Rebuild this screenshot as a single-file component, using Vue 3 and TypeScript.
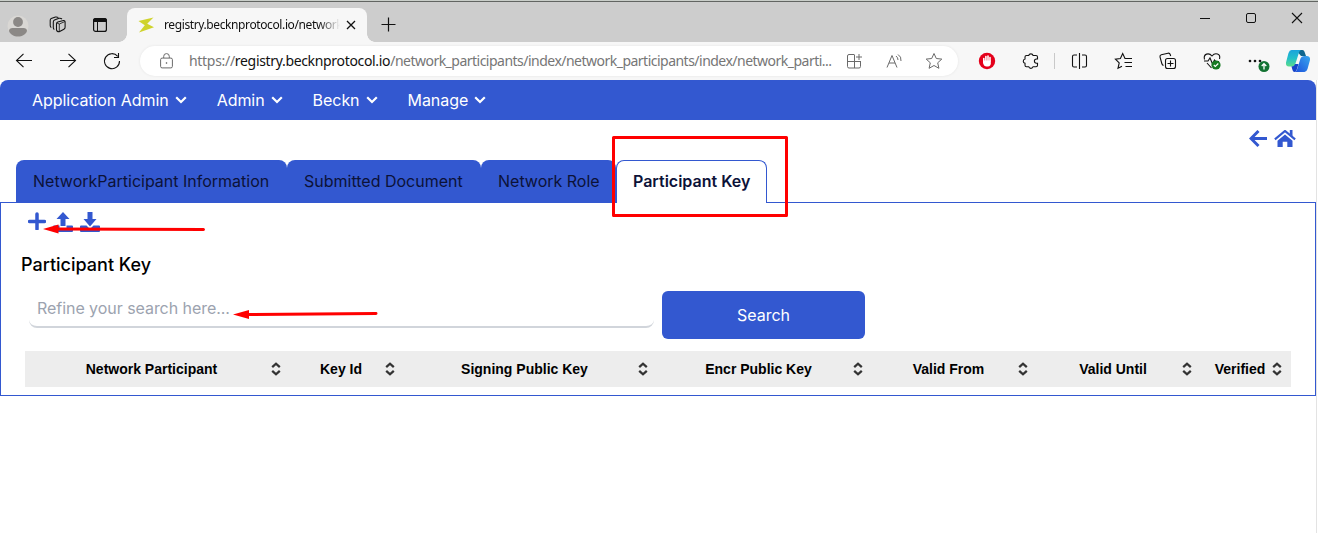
<script setup lang="ts">
const menus: string[] = ['Application Admin', 'Admin', 'Beckn', 'Manage']
const tabs: string[] = ['NetworkParticipant Information', 'Submitted Document', 'Network Role', 'Participant Key']
const activeTab = 'Participant Key'
const columns: string[] = [
  'Network Participant',
  'Key Id',
  'Signing Public Key',
  'Encr Public Key',
  'Valid From',
  'Valid Until',
  'Verified',
]
</script>

<template>
  <div class="window">
    <div class="topline"></div>
    <header class="strip">
      <svg class="avatar" width="22" height="22" viewBox="0 0 22 22">
        <circle cx="11" cy="11" r="10.500" fill="#d9d7d4" />
        <circle cx="11" cy="7" r="4.900" fill="#8b8886" />
        <path d="M2 16C2 14 3.500 13 5.500 13h11c2 0 3.500 1 3.500 3C19 19.500 15 21.500 11 21.500S3 19.500 2 16Z" fill="#8b8886" />
      </svg>
      <svg class="spaces" width="18" height="18" viewBox="0 0 18 18" fill="none" stroke="#111" stroke-width="1.050" stroke-linejoin="round">
        <path d="M7.500 8q0-1.500 1.300-2l5.700-1.500q1.600-.2 1.600 1.500v5.300q0 1.300-1.200 1.900l-4.700 2.600q-2.700 0-2.700-2Z" />
        <path d="M7.700 6.900 10.300 8 16 5.500M10.300 8v7.500" stroke-width=".8" />
        <path d="M5.300 13.500Q4.300 13 4.300 11.500V6Q4.300 4.600 5.500 4L10 2.300q1.800-.3 3 .7M2.300 11.500Q1.200 11 1.200 9.500V4.300q0-1.300 1-1.800L6.500 1q1.500-.2 2.800.4" />
      </svg>
      <svg class="panes" width="16" height="16" viewBox="0 0 16 16">
        <rect x="1.600" y="1.600" width="12.800" height="12.800" rx="2" fill="none" stroke="#111" stroke-width="1.200" />
        <path d="M1 5V3.500Q1 1 3.500 1h9Q15 1 15 3.500V5Z" fill="#111" /><path d="M5.500 5v9.500" stroke="#111" />
      </svg>
      <div class="btab">
        <svg width="18" height="18" viewBox="0 0 18 18"><path d="M16.500 1.500 1.500 5l6.300 4.300L2 16.500l15-5.300-6.800-3.500Z" fill="#cfd32c" /></svg>
        <span class="btitle">registry.becknprotocol.io/network</span>
        <svg width="10" height="10" viewBox="0 0 10 10"><path d="m1 1 8 8M9 1 1 9" stroke="#111" stroke-width="1.300" /></svg>
      </div>
      <svg class="plus" width="15" height="15" viewBox="0 0 15 15"><path d="M7.500.5v14M.5 7.500h14" stroke="#111" stroke-width="1.200" /></svg>
      <div class="controls">
        <svg width="46" height="32" viewBox="0 0 46 32"><path d="M18 16.500h10" stroke="#111" /></svg>
        <svg width="46" height="32" viewBox="0 0 46 32"><rect x="18.500" y="11.500" width="9" height="9" rx="1.500" fill="none" stroke="#111" /></svg>
        <svg width="46" height="32" viewBox="0 0 46 32"><path d="m18 11 10 10m0-10L18 21" stroke="#111" stroke-width="1.100" /></svg>
      </div>
    </header>

    <div class="toolbar">
      <div class="slots">
        <svg width="44" height="24" viewBox="0 0 44 24"><path d="M30 11.500H14.500m7-6.700-7 6.700 7 6.700" /></svg>
        <svg width="44" height="24" viewBox="0 0 44 24"><path d="M14 11.500h15.500m-7-6.700 7 6.700-7 6.700" /></svg>
        <svg width="44" height="24" viewBox="0 0 44 24"><path d="M27.700 7.300A7.500 7.500 0 1 0 29.500 12M28.500 4v4.500H24" /></svg>
      </div>
      <div class="address">
        <svg class="lock" width="13" height="16" viewBox="0 0 13 16"><rect x=".6" y="5.100" width="11.800" height="9.800" rx="1.500" /><path d="M3.700 5V3.400a2.800 2.800 0 0 1 5.600 0V5" /><circle cx="6.500" cy="10" r=".5" /></svg>
        <span class="url">https://<b>registry.becknprotocol.io</b><span class="path">/network_participants/index/network_participants/index/network_parti...</span></span>
        <div class="addr-icons">
          <svg width="40" height="20" viewBox="0 0 40 20"><path d="M20 3.500h-5q-1.500 0-1.500 1.500v10.500q0 1.500 1.500 1.500h10q1.500 0 1.500-1.500v-5M13.500 10.500H27M20.500 3.500V17M25 3v6M22 6h6" /></svg>
          <svg width="40" height="20" viewBox="0 0 40 20"><path d="m13 16.500 5-12 5 12M15 12h6M22 5q2 1.500 2 4M24 3.500q3.500 2 3 6.500" /></svg>
          <svg width="40" height="20" viewBox="0 0 40 20"><path d="m20 2.500 2.300 5 5.500.6-4.100 3.700 1.200 5.500-4.900-2.800-4.900 2.800 1.200-5.500-4.100-3.700 5.500-.6Z" /></svg>
        </div>
      </div>
      <div class="slots ext">
        <svg width="46" height="24" viewBox="0 0 46 24">
          <circle cx="23" cy="12" r="8.200" fill="#e4001b" stroke="none" />
          <path d="M19.800 12.500V9.500M21.900 12V7.500M24 12V7M26 12V8.500" stroke="#fff" stroke-width="1.600" stroke-linecap="round" /><path d="M19 11.500h7.800v2.800q0 3-2.800 3.300h-1.500q-2.500 0-3.500-3.500Z" fill="#fff" stroke="none" />
        </svg>
        <svg width="44" height="24" viewBox="0 0 44 24"><path d="M16.500 6.500h2.200a2.300 2.300 0 0 1 4.400 0H26q1.500 0 1.500 1.500v2h-1a2.100 2.100 0 0 0 0 4.200h1v2q0 1.500-1.500 1.500h-2.900a2.300 2.300 0 0 1-4.400 0h-2.200q-1.500 0-1.500-1.500v-1.900a2.200 2.200 0 0 1 0-4.300V8q0-1.500 1.500-1.500Z" /></svg>
        <i class="sep"></i>
        <svg width="46" height="24" viewBox="0 0 46 24"><path d="M21 6h-3q-1.500 0-1.500 1.500v9q0 1.500 1.500 1.500h3M26 6h3q1.500 0 1.500 1.500v9q0 1.500-1.500 1.500h-3M23.500 4v16" /></svg>
        <svg width="44" height="24" viewBox="0 0 44 24"><path d="M25 9.500h-2l-2.300-5-2.300 5-5 .6 3.800 3.800-1.200 5.400 4-2.100M22.500 9.500H30M22.500 13.500H30M23.500 17.500H30" /></svg>
        <svg width="44" height="24" viewBox="0 0 44 24"><rect x="19.500" y="9.500" width="10" height="10" rx="2" /><path d="M24.500 11.500v6M21.500 14.500h6M17.500 16.500q-1.300-.5-1.700-2L14 8q-.3-1.700 1.300-2.200L22 4.200q1.700-.3 2.200 1.300l.5 1.500" /></svg>
        <svg width="44" height="24" viewBox="0 0 44 24"><path d="M14.500 10.500C13 4.500 19 3.300 22 7c3-3.700 9-2.500 7.500 3M14 12h4l2-3 2.500 6 2-4 1.300 1.500H29M17 14l4.500 5" /><circle cx="26" cy="16" r="4.600" fill="#177a22" stroke="none" /><path d="m23.800 16 1.500 1.500 3-3" stroke="#fff" /></svg>
        <svg width="44" height="24" viewBox="0 0 44 24"><circle cx="16" cy="12" r=".8" fill="#111" /><circle cx="21" cy="12" r=".8" fill="#111" /><circle cx="26" cy="12" r=".8" fill="#111" /><circle cx="30" cy="17.500" r="5.500" fill="#137333" stroke="none" /><path d="M30 20.500V15m-2.300 2 2.300-2.300 2.300 2.300" stroke="#fff" stroke-width="1.300" /></svg>
        <svg width="40" height="24" viewBox="0 0 40 24">
          <defs>
            <linearGradient id="cpl" x1="0" y1="0" x2="0" y2="1"><stop offset="0" stop-color="#1ba3dc" /><stop offset=".5" stop-color="#23bfca" /><stop offset="1" stop-color="#5bdc8b" /></linearGradient>
            <linearGradient id="cpr" x1="1" y1="0" x2="0" y2="1"><stop offset="0" stop-color="#38a7ee" /><stop offset="1" stop-color="#1d51dc" /></linearGradient>
          </defs>
          <g stroke="none"><path d="M18 1h6.500q1.500 0 2 1.700L28 7h-5Z" fill="#10678f" /><path d="M13.500 1H23q-1.500.7-2 2.500l-3.500 11q-1 3-3.500 3h-3q-3.500 0-3-4L10.500 4q1-3 3-3Z" fill="url(#cpl)" /><path d="M26 7h2.500q4 0 3.500 4l-2.500 9q-1 3-3 3H17q1.500-.7 2-2.500l3.500-11Q23.300 7 26 7Z" fill="url(#cpr)" /><path d="M13.500 17.500q2.500 0 3.700-2.500l3.300 0-1.700 5.500q-.7 2.500-2.300 2.500-1.500 0-2-2Z" fill="#1744c8" /></g>
        </svg>
      </div>
    </div>

    <main class="page">
      <nav class="nav">
        <a v-for="m in menus" :key="m">{{ m }}<svg width="12" height="8" viewBox="0 0 12 8"><path d="m1.200 1.200 4.800 4.800 4.800-4.800" fill="none" stroke="#fff" stroke-width="2.200" /></svg></a>
      </nav>
      <div class="actions">
        <svg width="19" height="18" viewBox="0 0 19 18"><path d="M18 8.500H2.500M9.500 1 2 8.500 9.500 16" fill="none" stroke="#3358d0" stroke-width="3" /></svg>
        <svg width="22" height="18" viewBox="0 0 22 18" fill="#3358d0"><path d="M11 4.500 3.500 10.700v6.300h5.200v-5.200h4.600v5.200h5.200v-6.300Z" /><path d="m.9 9.300 10.100-8.300 10.100 8.300" fill="none" stroke="#3358d0" stroke-width="2.200" /><path d="M15.800 0h2.700v6.500l-2.700-2.200Z" /></svg>
      </div>
      <div class="tabs">
        <div v-for="t in tabs" :key="t" class="tab" :class="{ active: t === activeTab }">{{ t }}</div>
      </div>
      <section class="panel">
        <div class="tools">
          <svg width="18" height="18" viewBox="0 0 18 18"><path d="M9 2v15M1.500 9.500h15" stroke="#3358d0" stroke-width="3.500" stroke-linecap="round" /></svg>
          <svg width="20" height="21" viewBox="0 0 20 21" fill="#3358d0"><path d="M10 0 3.500 7H7.500v7h5V7h4ZM1 13.500h5.500V16h7v-2.500H19q1 0 1 1V19q0 1-1 1H1q-1 0-1-1v-4.500q0-1 1-1Z" /></svg>
          <svg width="20" height="21" viewBox="0 0 20 21" fill="#3358d0"><path d="M7.500 0h5v7h4L10 14.500 3.500 7h4ZM1 13.500h5.500l3.500 3.500 3.500-3.500H19q1 0 1 1V19q0 1-1 1H1q-1 0-1-1v-4.500q0-1 1-1Z" /></svg>
        </div>
        <h1>Participant Key</h1>
        <div class="search">
          <input type="text" placeholder="Refine your search here..." />
          <button>Search</button>
        </div>
        <div class="thead">
          <div v-for="c in columns" :key="c" class="th">
            <span>{{ c }}</span>
            <svg width="10" height="14" viewBox="0 0 10 14"><path d="m1.200 5.100 3.800-3.400 3.800 3.400M1.200 8.900l3.800 3.400 3.800-3.400" fill="none" stroke="#333" stroke-width="2.300" /></svg>
          </div>
        </div>
      </section>
    </main>

    <svg class="marks" width="1318" height="533" viewBox="0 0 1318 533" fill="none" stroke="#f00" stroke-width="3" stroke-linecap="round" stroke-linejoin="round">
      <rect x="613.500" y="137.500" width="173" height="78" />
      <path d="M56 229 203.500 229.500M247 314.500 376 313.500" />
      <path d="M43 229l15.500-4.500v9ZM233 314.500l16-4.500v9Z" fill="#f00" stroke="none" />
    </svg>
  </div>
</template>

<style>
html, body { margin: 0; background: #fff; overflow: hidden; }
</style>
<style scoped>
* { box-sizing: border-box; }
svg { display: block; flex: none; }
.window { position: relative; width: 1318px; height: 533px; overflow: hidden; background: #fff; font-family: Inter, "Liberation Sans", sans-serif; }
.topline { height: 2px; background: #c9cec9; border-bottom: 1px solid #626562; }
.strip { height: 40px; background: #cdcdcd; display: flex; }
.avatar { margin: 13px 0 0 7px; }
.spaces { margin: 14px 0 0 20px; }
.panes { margin: 15px 0 0 25px; }
.btab { position: relative; width: 240px; height: 34px; margin: 6px 0 0 19px; background: #f7f7f7; border-radius: 8px 8px 0 0; display: flex; align-items: center; padding: 0 11px 0 10px; }
.btab::before, .btab::after { content: ""; position: absolute; bottom: 0; width: 8px; height: 8px; }
.btab::before { left: -8px; background: radial-gradient(circle at 0 0, transparent 7.5px, #f7f7f7 8px); }
.btab::after { right: -8px; background: radial-gradient(circle at 100% 0, transparent 7.5px, #f7f7f7 8px); }
.btitle { width: 182px; margin: 0 1px 0 9px; white-space: nowrap; font: 12px/18px "Noto Sans", sans-serif; letter-spacing: -.39px; color: #111; -webkit-mask-image: linear-gradient(90deg, #000 155px, transparent 176px); mask-image: linear-gradient(90deg, #000 155px, transparent 176px); }
.plus { margin: 15px 0 0 14px; }
.controls { display: flex; margin-left: auto; margin-right: -2px; }
.toolbar { height: 38px; background: #f7f7f7; display: flex; align-items: center; }
.slots { display: flex; fill: none; stroke: #111; stroke-width: 1.1; }
.slots:first-child { margin-left: 2px; }
.address { width: 819px; height: 30px; margin-left: 6px; background: #fff; border-radius: 15px; box-shadow: 0 0 3px rgba(0,0,0,.08); display: flex; align-items: center; fill: none; stroke: #6a6a6a; stroke-width: 1; }
.lock { margin: 0 16px 0 20px; }
.url { width: 645px; white-space: nowrap; font: 14px/20px "Noto Sans", sans-serif; color: #767676; letter-spacing: -.3px; }
.url b { font-weight: 400; color: #111; letter-spacing: -.33px; }
.path { letter-spacing: -.515px; }
.addr-icons { display: flex; }
.ext { margin-left: 6px; }
.sep { width: 1px; height: 16px; margin: 4px 1px 0 0; background: #c9c9c9; }
.page { width: 1317px; height: 453px; border-right: 1px solid #e3e3e3; }
.nav { width: 1316px; height: 40px; background: #3358d0; border-radius: 8px 8px 0 0; display: flex; gap: 30px; padding-left: 32px; color: #fff; font-size: 16px; letter-spacing: -.05px; }
.nav a { display: flex; align-items: center; gap: 6px; }
.actions { height: 40px; display: flex; justify-content: flex-end; gap: 6px; padding: 10px 20px 0 0; }
.tabs { position: relative; display: flex; height: 43px; margin-bottom: -1px; padding-left: 16px; }
.tab { height: 43px; padding: 0 0 0 17px; line-height: 43px; font-size: 16px; background: #3358d0; color: #0c1238; border-radius: 8px 8px 0 0; white-space: nowrap; }
.tab:nth-child(1) { width: 271px; }
.tab:nth-child(2) { width: 194px; }
.tab:nth-child(3) { width: 135px; }
.tab:nth-child(4) { width: 151px; }
.tab.active { background: #fff; border: 1px solid #3358d0; border-bottom: 0; padding-left: 16px; line-height: 41px; font-weight: 600; }
.panel { width: 1316px; height: 194px; border: 1px solid #3358d0; }
.tools { display: flex; gap: 7px; height: 40px; padding: 9px 0 0 27px; }
h1 { margin: 8px 0 0 20px; font-size: 18px; line-height: 28px; font-weight: 500; color: #000; }
.search { display: flex; margin: 12px 0 0 28px; gap: 8px; height: 48px; }
input { width: 625px; height: 37px; border: 0; border-bottom: 2px solid #d1d5db; border-radius: 8px; padding: 0 8px 2px; font: 16px Inter, sans-serif; letter-spacing: -.05px; background: #fff; outline: none; }
input::placeholder { color: #9ca3af; opacity: 1; }
button { width: 203px; height: 48px; border: 0; border-radius: 6px; background: #3358d0; color: #fff; font: 16px Inter, sans-serif; }
.thead { display: grid; grid-template-columns: 265px 114px 253px 215px 165px 164px 90px; width: 1266px; height: 36px; margin: 12px 0 0 24px; background: #ededed; }
.th { display: flex; align-items: center; padding: 0 9px 0 7px; font: bold 14px "Liberation Sans", sans-serif; color: #000; }
.th span { flex: 1; text-align: center; white-space: nowrap; }
.marks { position: absolute; left: 0; top: 0; pointer-events: none; }
</style>
